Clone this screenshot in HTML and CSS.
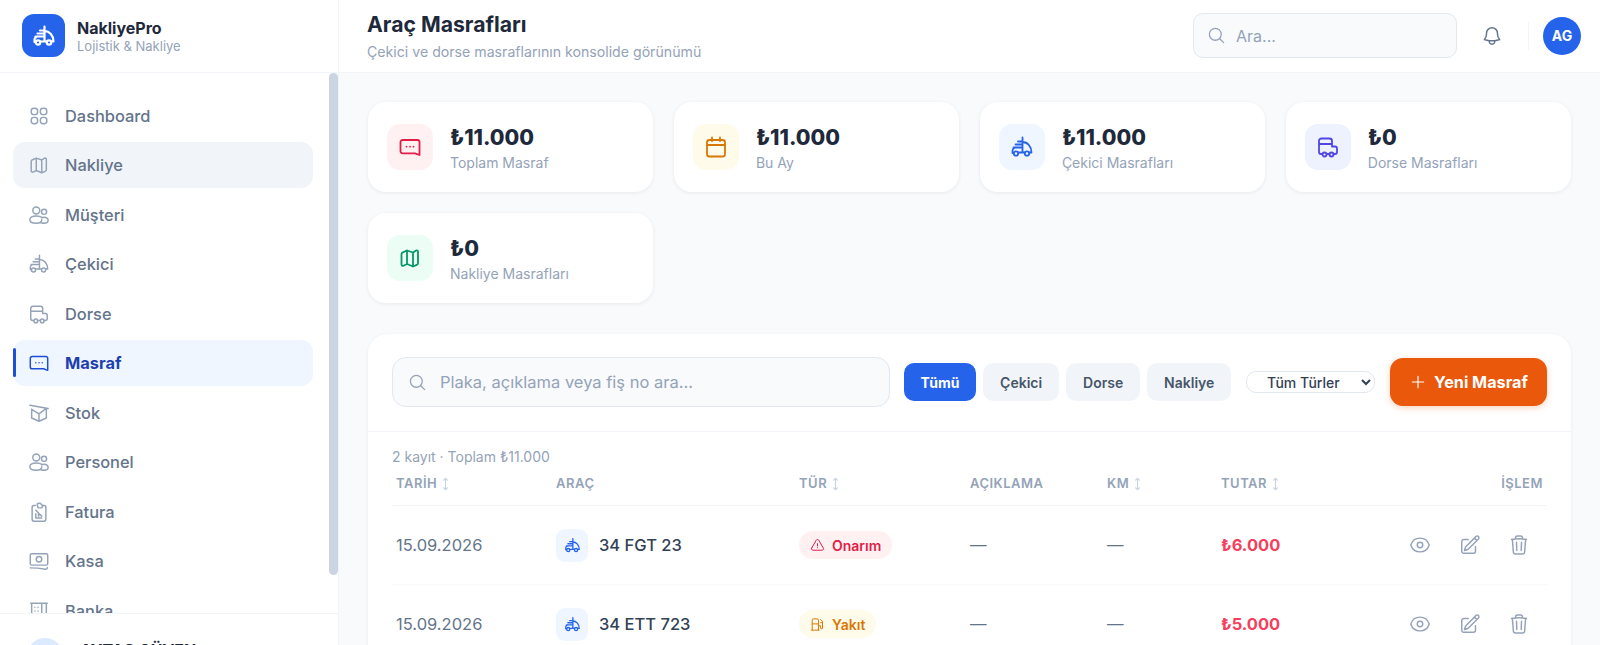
FILE: index.html
```html
<!DOCTYPE html>
<html lang="tr">
<head>
  <meta charset="UTF-8" />
  <title>Araç Masrafları - NakliyePro</title>
  <link rel="stylesheet" href="styles.css">
</head>
<body>
  <svg class="sprite" xmlns="http://www.w3.org/2000/svg">
    <symbol id="i-truck" viewBox="0 0 24 24"><path d="M12.500 2.500V17.500M12.500 7c5 0 9 4.500 9 10.500H19.500M12.500 17.500h2M8 6.500h4.500M5.500 9.500h7M3.500 12.500h9M2.500 18v-2a3 3 0 0 1 2-3M2.500 18h1M8.500 17.500h4"/><circle cx="6" cy="18.500" r="2.200"/><circle cx="17" cy="18.500" r="2.200"/></symbol>
    <symbol id="i-trailer" viewBox="0 0 24 24"><path d="M3 17V6a2.500 2.500 0 0 1 2.500-2.500h8A2.500 2.500 0 0 1 16 6v5.500M3 9h13M16 11.500h3a2 2 0 0 1 2 2v3.500a2 2 0 0 1-2 2h-1.500M3 17a2 2 0 0 0 2 2h1M11 19h2.500"/><circle cx="8.500" cy="19.500" r="2"/><circle cx="15.500" cy="19.500" r="2"/></symbol>
    <symbol id="i-grid" viewBox="0 0 24 24"><rect x="3.500" y="3.500" width="7" height="7" rx="3"/><rect x="13.500" y="3.500" width="7" height="7" rx="3"/><rect x="3.500" y="13.500" width="7" height="7" rx="3"/><rect x="13.500" y="13.500" width="7" height="7" rx="3"/></symbol>
    <symbol id="i-map" viewBox="0 0 24 24"><path d="M9 4.500 4.800 6.300A2 2 0 0 0 3.500 8.200v10.300c0 1 1 1.600 1.900 1.200L9 18l6 2.500 3.700-1.600a2 2 0 0 0 1.300-1.900V5.700c0-1-1-1.600-1.900-1.200L15 6.500 9 4.500ZM9 4.500V18M15 6.500v14"/></symbol>
    <symbol id="i-users" viewBox="0 0 24 24"><circle cx="9" cy="7" r="3.800"/><circle cx="17.500" cy="8.500" r="2.800"/><path d="M15 14.500c-1-.8-3-1.500-6-1.500-4 0-7 1.700-7 4.200S5 21 9 21s6-1.300 6-3.800M14.500 20.500c.8.300 2 .500 3 .500 2.500 0 4.500-1.200 4.500-3.200s-2-3.300-4.500-3.300c-1 0-2 .2-2.800.600"/></symbol>
    <symbol id="i-expense" viewBox="0 0 24 24"><path d="M21.500 7v13L17 18.300H4.500a2 2 0 0 1-2-2V7a2 2 0 0 1 2-2h15a2 2 0 0 1 2 2Z"/><path d="M8.500 11.700h.01M12 11.700h.01M15.500 11.700h.01"/></symbol>
    <symbol id="i-box" viewBox="0 0 24 24"><path d="M2 3.500 22 7M4 8v9.500l8 3.500 8-3.500V7M4 8l8 5 8-6M12 13v8"/></symbol>
    <symbol id="i-invoice" viewBox="0 0 24 24"><path d="M8 5H6.500a2 2 0 0 0-2 2v13a2 2 0 0 0 2 2h11a2 2 0 0 0 2-2V7a2 2 0 0 0-2-2H16M10 3.500c1-1.500 3.500-1.500 4.500 0l1.500 2-1 2H11L10 3.500ZM8.500 10l3 3v3.500M8.500 14v4.500h6.500M11.500 13.500 15 16.500"/></symbol>
    <symbol id="i-cash" viewBox="0 0 24 24"><rect x="2.500" y="4" width="19" height="12.500" rx="1.500"/><circle cx="12" cy="10.200" r="3"/><path d="M2.500 19.500c5.500 0 11 .5 16.500 1.500 1 .1 2-.5 2-1.500v-.500"/></symbol>
    <symbol id="i-bank" viewBox="0 0 24 24"><path d="M3 3.500h18M4 3.500V21M20 3.500V21M3 21h18M15 3.500V21M7.500 8h.01M11 8h.01M7.500 12h.01M11 12h.01M7.500 16h.01M11 16h.01"/></symbol>
    <symbol id="i-search" viewBox="0 0 24 24"><path d="m21 21-5.197-5.197m0 0A7.500 7.500 0 1 0 5.196 5.196a7.500 7.500 0 0 0 10.607 10.607Z"/></symbol>
    <symbol id="i-bell" viewBox="0 0 24 24"><path d="M14.857 17.082a23.848 23.848 0 0 0 5.454-1.310A8.967 8.967 0 0 1 18 9.750V9A6 6 0 0 0 6 9v.750a8.967 8.967 0 0 1-2.312 6.022c1.733.640 3.560 1.085 5.455 1.310m5.714 0a24.255 24.255 0 0 1-5.714 0m5.714 0a3 3 0 1 1-5.714 0"/></symbol>
    <symbol id="i-calendar" viewBox="0 0 24 24"><rect x="3" y="5" width="18" height="16.500" rx="2.500"/><path d="M3 10h18M8 2.500V6M16 2.500V6"/></symbol>
    <symbol id="i-plus" viewBox="0 0 24 24"><path d="M12 4.500v15M4.500 12h15"/></symbol>
    <symbol id="i-sort" viewBox="0 0 10 16"><path d="M5 1.500v13M2.500 4 5 1.500 7.500 4M2.500 12 5 14.500 7.500 12"/></symbol>
    <symbol id="i-warn" viewBox="0 0 24 24"><path d="M12 9v3.750m-9.303 3.376c-.866 1.500.217 3.374 1.948 3.374h14.710c1.730 0 2.813-1.874 1.948-3.374L13.949 3.378c-.866-1.500-3.032-1.500-3.898 0L2.697 16.126ZM12 15.750h.007v.008H12v-.008Z"/></symbol>
    <symbol id="i-fuel" viewBox="0 0 24 24"><path d="M3.500 21V5a2 2 0 0 1 2-2h6a2 2 0 0 1 2 2v16M2.500 21h12M3.500 11h10M17 4l3 3v10.500a1.500 1.500 0 0 1-3 0V14h-3.500M17 9h3"/></symbol>
    <symbol id="i-eye" viewBox="0 0 24 24"><path d="M2.036 12.322a1.012 1.012 0 0 1 0-.639C3.423 7.510 7.360 4.500 12 4.500c4.638 0 8.573 3.007 9.963 7.178.070.207.070.431 0 .639C20.577 16.490 16.640 19.500 12 19.500c-4.638 0-8.573-3.007-9.963-7.178Z"/><path d="M15 12a3 3 0 1 1-6 0 3 3 0 0 1 6 0Z"/></symbol>
    <symbol id="i-edit" viewBox="0 0 24 24"><path d="m16.862 4.487 1.687-1.688a1.875 1.875 0 1 1 2.652 2.652L10.582 16.070a4.500 4.500 0 0 1-1.897 1.130L6 18l.8-2.685a4.500 4.500 0 0 1 1.130-1.897l8.932-8.931Zm0 0L19.500 7.125M18 14v4.750A2.250 2.250 0 0 1 15.750 21H5.250A2.250 2.250 0 0 1 3 18.750V8.250A2.250 2.250 0 0 1 5.250 6H10"/></symbol>
    <symbol id="i-trash" viewBox="0 0 24 24"><path d="m14.740 9-.346 9m-4.788 0L9.260 9m9.968-3.210c.342.052.682.107 1.022.166m-1.022-.165L18.160 19.673a2.250 2.250 0 0 1-2.244 2.077H8.084a2.250 2.250 0 0 1-2.244-2.077L4.772 5.790m14.456 0a48.108 48.108 0 0 0-3.478-.397m-12 .562c.34-.059.68-.114 1.022-.165m0 0a48.110 48.110 0 0 1 3.478-.397m7.500 0v-.916c0-1.180-.91-2.164-2.090-2.201a51.964 51.964 0 0 0-3.320 0c-1.180.037-2.090 1.022-2.090 2.201v.916m7.500 0a48.667 48.667 0 0 0-7.500 0"/></symbol>
  </svg>

  <div class="app">
    <aside class="sidebar">
      <div class="brand">
        <div class="brand-logo"><svg class="icon icon-bold"><use href="#i-truck"/></svg></div>
        <div>
          <div class="brand-name">NakliyePro</div>
          <div class="brand-sub">Lojistik &amp; Nakliye</div>
        </div>
      </div>
      <nav class="nav">
        <a class="nav-item"><svg class="icon"><use href="#i-grid"/></svg>Dashboard</a>
        <a class="nav-item hover"><svg class="icon"><use href="#i-map"/></svg>Nakliye</a>
        <a class="nav-item"><svg class="icon"><use href="#i-users"/></svg>Müşteri</a>
        <a class="nav-item"><svg class="icon"><use href="#i-truck"/></svg>Çekici</a>
        <a class="nav-item"><svg class="icon"><use href="#i-trailer"/></svg>Dorse</a>
        <a class="nav-item active"><svg class="icon"><use href="#i-expense"/></svg>Masraf</a>
        <a class="nav-item"><svg class="icon"><use href="#i-box"/></svg>Stok</a>
        <a class="nav-item"><svg class="icon"><use href="#i-users"/></svg>Personel</a>
        <a class="nav-item"><svg class="icon"><use href="#i-invoice"/></svg>Fatura</a>
        <a class="nav-item"><svg class="icon"><use href="#i-cash"/></svg>Kasa</a>
        <a class="nav-item"><svg class="icon"><use href="#i-bank"/></svg>Banka</a>
        <div class="nav-thumb"></div>
      </nav>
      <div class="user">
        <div class="user-avatar"></div>
        <div class="user-name">AYTAÇ GÜVEN</div>
      </div>
    </aside>

    <div class="main">
      <header class="topbar">
        <div class="topbar-title">
          <h1>Araç Masrafları</h1>
          <p>Çekici ve dorse masraflarının konsolide görünümü</p>
        </div>
        <div class="topbar-right">
          <label class="top-search">
            <svg class="icon"><use href="#i-search"/></svg>
            <input type="text" placeholder="Ara...">
          </label>
          <svg class="icon bell"><use href="#i-bell"/></svg>
          <span class="top-sep"></span>
          <div class="avatar">AG</div>
        </div>
      </header>

      <main class="content">
        <section class="stats">
          <div class="stat">
            <div class="stat-icon rose"><svg class="icon"><use href="#i-expense"/></svg></div>
            <div><div class="stat-value">₺11.000</div><div class="stat-label">Toplam Masraf</div></div>
          </div>
          <div class="stat">
            <div class="stat-icon amber"><svg class="icon"><use href="#i-calendar"/></svg></div>
            <div><div class="stat-value">₺11.000</div><div class="stat-label">Bu Ay</div></div>
          </div>
          <div class="stat">
            <div class="stat-icon blue"><svg class="icon"><use href="#i-truck"/></svg></div>
            <div><div class="stat-value">₺11.000</div><div class="stat-label">Çekici Masrafları</div></div>
          </div>
          <div class="stat">
            <div class="stat-icon violet"><svg class="icon"><use href="#i-trailer"/></svg></div>
            <div><div class="stat-value">₺0</div><div class="stat-label">Dorse Masrafları</div></div>
          </div>
          <div class="stat">
            <div class="stat-icon green"><svg class="icon"><use href="#i-map"/></svg></div>
            <div><div class="stat-value">₺0</div><div class="stat-label">Nakliye Masrafları</div></div>
          </div>
        </section>

        <section class="panel">
          <div class="toolbar">
            <label class="list-search">
              <svg class="icon"><use href="#i-search"/></svg>
              <input type="text" placeholder="Plaka, açıklama veya fiş no ara...">
            </label>
            <div class="filters">
              <button class="filter on">Tümü</button>
              <button class="filter">Çekici</button>
              <button class="filter">Dorse</button>
              <button class="filter">Nakliye</button>
            </div>
            <select class="type-select">
              <option>Tüm Türler</option>
            </select>
            <button class="add-btn"><svg class="icon"><use href="#i-plus"/></svg>Yeni Masraf</button>
          </div>

          <div class="list">
            <div class="summary">2 kayıt · Toplam ₺11.000</div>
            <table>
              <thead>
                <tr>
                  <th class="col-date">TARİH <svg class="sort"><use href="#i-sort"/></svg></th>
                  <th class="col-vehicle">ARAÇ</th>
                  <th class="col-type">TÜR <svg class="sort"><use href="#i-sort"/></svg></th>
                  <th class="col-desc">AÇIKLAMA</th>
                  <th class="col-km">KM <svg class="sort"><use href="#i-sort"/></svg></th>
                  <th class="col-amount">TUTAR <svg class="sort"><use href="#i-sort"/></svg></th>
                  <th class="col-actions">İŞLEM</th>
                </tr>
              </thead>
              <tbody>
                <tr>
                  <td class="date">15.09.2026</td>
                  <td><div class="plate"><span class="plate-icon"><svg class="icon"><use href="#i-truck"/></svg></span>34 FGT 23</div></td>
                  <td><span class="badge repair"><svg class="icon"><use href="#i-warn"/></svg>Onarım</span></td>
                  <td class="dash">—</td>
                  <td class="dash">—</td>
                  <td class="amount">₺6.000</td>
                  <td>
                    <div class="actions">
                      <button class="act"><svg class="icon"><use href="#i-eye"/></svg></button>
                      <button class="act"><svg class="icon"><use href="#i-edit"/></svg></button>
                      <button class="act"><svg class="icon"><use href="#i-trash"/></svg></button>
                    </div>
                  </td>
                </tr>
                <tr>
                  <td class="date">15.09.2026</td>
                  <td><div class="plate"><span class="plate-icon"><svg class="icon"><use href="#i-truck"/></svg></span>34 ETT 723</div></td>
                  <td><span class="badge fuel"><svg class="icon"><use href="#i-fuel"/></svg>Yakıt</span></td>
                  <td class="dash">—</td>
                  <td class="dash">—</td>
                  <td class="amount">₺5.000</td>
                  <td>
                    <div class="actions">
                      <button class="act"><svg class="icon"><use href="#i-eye"/></svg></button>
                      <button class="act"><svg class="icon"><use href="#i-edit"/></svg></button>
                      <button class="act"><svg class="icon"><use href="#i-trash"/></svg></button>
                    </div>
                  </td>
                </tr>
              </tbody>
            </table>
          </div>
        </section>
      </main>
    </div>
  </div>
</body>
</html>
```

FILE: styles.css
```css
* {
  box-sizing: border-box;
}
html, body {
  margin: 0;
  height: 100%;
  overflow: hidden;
}
body {
  font-family: Inter, 'Noto Sans', sans-serif;
  background: #f8fafc;
  color: #1e293b;
}
.sprite {
  display: none;
}
.icon {
  fill: none;
  stroke: currentColor;
  stroke-width: 1.6;
  stroke-linecap: round;
  stroke-linejoin: round;
  flex: none;
}
.icon-bold {
  stroke-width: 2.2;
}
input, button, select {
  font-family: inherit;
}

.app {
  display: flex;
  height: 100vh;
  overflow: hidden;
}

/* sidebar */
.sidebar {
  width: 339px;
  flex: none;
  height: 700px;
  background: #fff;
  border-right: 1px solid #f1f5f9;
  display: flex;
  flex-direction: column;
}
.brand {
  height: 73px;
  flex: none;
  display: flex;
  align-items: center;
  gap: 12px;
  padding: 0 23px 1px 22px;
  border-bottom: 1px solid #f1f5f9;
}
.brand-logo {
  width: 43px;
  height: 43px;
  border-radius: 12px;
  background: #2563eb;
  color: #fff;
  display: flex;
  align-items: center;
  justify-content: center;
}
.brand-logo .icon {
  width: 24px;
  height: 24px;
}
.brand-name {
  font-size: 16px;
  font-weight: 700;
  line-height: 20px;
}
.brand-sub {
  font-size: 13px;
  line-height: 16px;
  color: #94a3b8;
}
.nav {
  position: relative;
  height: 540px;
  flex: none;
  overflow: hidden;
  padding: 19.5px 25px 0 13px;
}
.nav-item {
  position: relative;
  height: 46px;
  margin-bottom: 3.5px;
  display: flex;
  align-items: center;
  gap: 15px;
  padding-left: 15px;
  border-radius: 12px;
  font-size: 16.4px;
  font-weight: 500;
  color: #64748b;
}
.nav-item .icon {
  width: 22px;
  height: 22px;
  color: #94a3b8;
}
.nav-item.hover {
  background: #f1f5f9;
}
.nav-item.active {
  background: #eff6ff;
  color: #1e40af;
  font-weight: 700;
}
.nav-item.active .icon {
  color: #1d4ed8;
}
.nav-item.active::before {
  content: "";
  position: absolute;
  left: 0;
  top: 8px;
  bottom: 9px;
  width: 3px;
  border-radius: 3px;
  background: #1d4ed8;
}
.nav-thumb {
  position: absolute;
  top: 0;
  right: 0;
  width: 9px;
  height: 502px;
  border-radius: 5px;
  background: #cbd5e1;
}
.user {
  display: flex;
  gap: 17px;
  padding: 24px 27px;
  border-top: 1px solid #f1f5f9;
}
.user-avatar {
  width: 36px;
  height: 36px;
  flex: none;
  border-radius: 50%;
  background: #dbeafe;
}
.user-name {
  font-size: 16px;
  font-weight: 700;
  line-height: 18px;
  padding-top: 3px;
}

/* top bar */
.main {
  flex: 1;
  min-width: 0;
}
.topbar {
  height: 73px;
  display: flex;
  align-items: center;
  justify-content: space-between;
  padding: 0 19px 1px 28px;
  background: #fff;
  border-bottom: 1px solid #f1f5f9;
}
.topbar h1 {
  margin: 0;
  font-size: 21.2px;
  line-height: 26px;
  font-weight: 700;
}
.topbar p {
  margin: 6px 0 0;
  font-size: 14.15px;
  line-height: 18px;
  color: #94a3b8;
}
.topbar-right {
  display: flex;
  align-items: center;
}
.top-search {
  width: 264px;
  height: 45px;
  display: flex;
  align-items: center;
  gap: 8px;
  padding: 0 13px;
  background: #f8fafc;
  border: 1px solid #e2e8f0;
  border-radius: 10px;
  color: #94a3b8;
}
.top-search .icon, .list-search .icon {
  width: 19px;
  height: 19px;
}
input {
  flex: 1;
  min-width: 0;
  border: 0;
  outline: 0;
  background: none;
  font-size: 16px;
  color: #1e293b;
}
.list-search input {
  font-size: 16.5px;
}
input::placeholder {
  color: #94a3b8;
  opacity: 1;
}
.bell {
  width: 22px;
  height: 22px;
  margin: 0 25px 0 24px;
  color: #64748b;
}
.top-sep {
  width: 1px;
  height: 28px;
  background: #f1f5f9;
}
.avatar {
  width: 38px;
  height: 38px;
  margin-left: 14px;
  border-radius: 50%;
  background: #2563eb;
  color: #fff;
  font-size: 14px;
  font-weight: 700;
  display: flex;
  align-items: center;
  justify-content: center;
}

/* stat cards */
.content {
  padding: 29px 29px 0;
}
.stats {
  display: grid;
  grid-template-columns: repeat(4, 1fr);
  gap: 20.8px;
}
.stat {
  height: 90px;
  display: flex;
  align-items: center;
  gap: 17px;
  padding: 0 19px;
  background: #fff;
  border-radius: 18px;
  box-shadow: 0 1px 4px rgba(15, 23, 42, 0.07);
}
.stat-icon {
  width: 46px;
  height: 46px;
  flex: none;
  border-radius: 13px;
  display: flex;
  align-items: center;
  justify-content: center;
}
.stat-icon .icon {
  width: 24px;
  height: 24px;
  stroke-width: 1.8;
}
.rose { background: #fff1f2; color: #e11d48; }
.amber { background: #fffbeb; color: #d97706; }
.blue { background: #eff6ff; color: #2563eb; }
.violet { background: #eef2ff; color: #4f46e5; }
.green { background: #ecfdf5; color: #059669; }
.stat-value {
  font-size: 21.3px;
  line-height: 28px;
  font-weight: 800;
  padding-top: 1px;
}
.stat-label {
  margin-top: 3px;
  font-size: 14px;
  line-height: 18px;
  color: #94a3b8;
}

/* expense list */
.panel {
  margin-top: 31px;
  background: #fff;
  border-radius: 20px;
  box-shadow: 0 1px 4px rgba(15, 23, 42, 0.06);
}
.toolbar {
  height: 98px;
  display: flex;
  align-items: center;
  gap: 15px;
  padding: 0 24px;
  border-bottom: 1px solid #f1f5f9;
}
.list-search {
  flex: 1;
  height: 50px;
  display: flex;
  align-items: center;
  gap: 11px;
  padding: 0 15px;
  background: #f8fafc;
  border: 1px solid #e2e8f0;
  border-radius: 14px;
  color: #94a3b8;
}
.filters {
  display: flex;
  gap: 7.5px;
  margin-left: -1px;
}
.filter {
  height: 38px;
  padding: 0 16.7px;
  border: 0;
  border-radius: 10px;
  background: #f1f5f9;
  color: #475569;
  font-size: 14px;
  font-weight: 600;
}
.filter.on {
  padding: 0 16.5px;
  background: #2563eb;
  color: #fff;
  font-weight: 700;
}
.type-select {
  width: 129px;
  height: 22px;
  padding: 0 0 0 16px;
  border: 1px solid #e2e8f0;
  border-radius: 10px;
  background: #fff;
  color: #334155;
  font-size: 14px;
  font-weight: 500;
}
.add-btn {
  width: 157px;
  height: 48px;
  display: flex;
  align-items: center;
  justify-content: center;
  gap: 7px;
  border: 0;
  border-radius: 13px;
  background: #ea580c;
  color: #fff;
  font-size: 16.2px;
  font-weight: 700;
  box-shadow: 0 2px 6px rgba(234, 88, 12, 0.25);
}
.add-btn .icon {
  width: 18px;
  height: 18px;
}
.list {
  padding: 16px 24px 0;
}
.summary {
  font-size: 14px;
  line-height: 18px;
  color: #94a3b8;
}
table {
  width: 100%;
  table-layout: fixed;
  border-collapse: collapse;
}
th {
  height: 40px;
  padding: 0 4px 5px;
  text-align: left;
  font-size: 13px;
  font-weight: 600;
  letter-spacing: 0.5px;
  color: #94a3b8;
  border-bottom: 1px solid #f1f5f9;
}
.sort {
  width: 9px;
  height: 14px;
  vertical-align: -3px;
  fill: none;
  stroke: #cbd5e1;
  stroke-width: 1.3;
}
.col-date { width: 160px; }
.col-vehicle { width: 243px; }
.col-type { width: 171px; }
.col-desc { width: 137px; }
.col-km { width: 114px; }
.col-actions { text-align: right; }
td {
  height: 79px;
  padding: 0 4px;
  font-size: 16.5px;
  border-bottom: 1px solid #f8fafc;
}
.date {
  color: #64748b;
}
.dash {
  color: #64748b;
}
.plate {
  display: flex;
  align-items: center;
  gap: 11px;
  font-weight: 500;
  color: #334155;
}
.plate-icon {
  width: 32px;
  height: 33px;
  border-radius: 9px;
  background: #eff6ff;
  color: #2563eb;
  display: flex;
  align-items: center;
  justify-content: center;
}
.plate-icon .icon {
  width: 17px;
  height: 17px;
  stroke-width: 1.9;
}
.badge {
  display: inline-flex;
  align-items: center;
  gap: 7px;
  height: 28px;
  padding: 0 11px;
  border-radius: 14px;
  font-size: 14px;
  font-weight: 600;
}
.badge .icon {
  width: 15px;
  height: 15px;
}
.badge.repair {
  background: #fff1f2;
  color: #e11d48;
}
.badge.fuel {
  background: #fffbeb;
  color: #d97706;
}
.amount {
  font-weight: 700;
  color: #f43f5e;
}
.actions {
  display: flex;
  justify-content: flex-end;
  gap: 11.5px;
  padding-right: 5px;
}
.act {
  width: 38px;
  height: 38px;
  padding: 0;
  border: 0;
  background: none;
  color: #94a3b8;
  display: flex;
  align-items: center;
  justify-content: center;
}
.act .icon {
  width: 22px;
  height: 22px;
}
```
